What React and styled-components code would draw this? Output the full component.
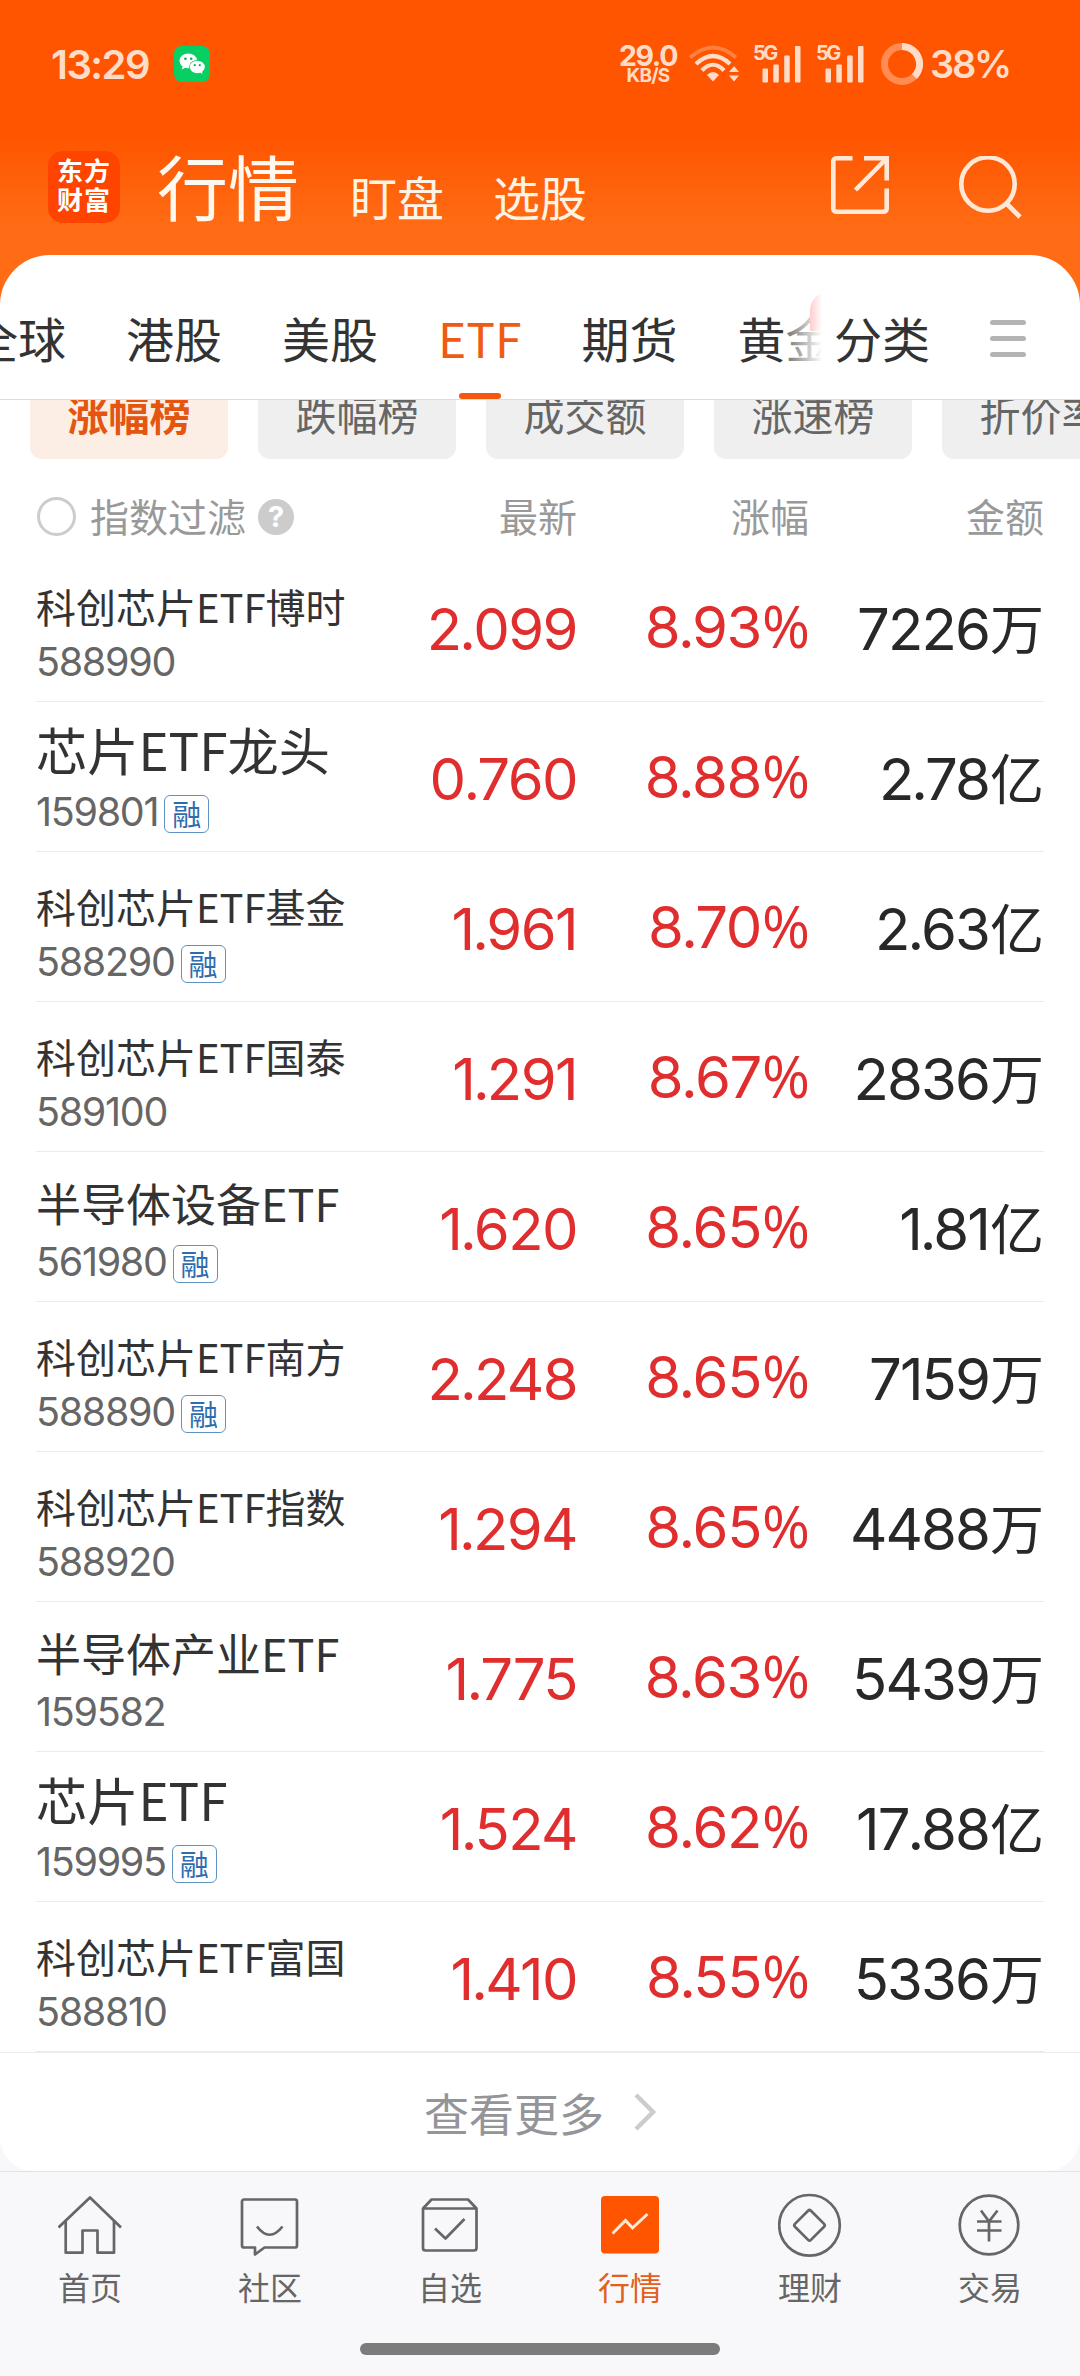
import React from 'react';
import styled, { createGlobalStyle, css } from 'styled-components';

const CJK = '"Noto Sans CJK SC", "Noto Sans", sans-serif';
const NUM = 'Inter, "Noto Sans CJK SC", sans-serif';

const GlobalStyle = createGlobalStyle`
  *, *::before, *::after { box-sizing: border-box; }
  body { margin: 0; background: #f8f8fa; font-family: ${CJK}; }
  svg { display: block; flex: none; }
`;

const Screen = styled.div`
  width: 1080px;
  height: 2376px;
  overflow: hidden;
  display: flex;
  flex-direction: column;
  background: #f8f8fa;
`;

const Hero = styled.header`
  height: 303px;
  flex: none;
  background: linear-gradient(#ff5500 0, #ff5500 136px, #ff6c15 228px, #ff6c15 100%);
`;

const StatusBar = styled.div`
  height: 128px;
  padding: 0 68px 0 51px;
  display: flex;
  align-items: center;
  color: #ffdcc8;
  font-family: ${NUM};
`;

const Clock = styled.span`
  font-size: 40px;
  font-weight: 600;
  letter-spacing: -1.5px;
  width: 123px;
`;

const StatusRight = styled.div`
  margin-left: auto;
  display: flex;
  align-items: center;
`;

const Speed = styled.div`
  width: 60px;
  margin-right: 10px;
  display: flex;
  flex-direction: column;
  align-items: center;
  font-weight: 700;
  white-space: nowrap;
`;

const SpeedValue = styled.span`
  font-size: 28.5px;
  line-height: 22px;
  letter-spacing: -1.4px;
`;

const SpeedUnit = styled.span`
  font-size: 19px;
  line-height: 17px;
  letter-spacing: -0.8px;
`;

const Signal = styled.div`
  position: relative;
  width: 48px;
  height: 38px;
  margin-left: ${(p) => p.$gap}px;
`;

const SignalTag = styled.span`
  position: absolute;
  left: 0;
  top: 0;
  font-size: 20px;
  line-height: 16px;
  font-weight: 700;
  letter-spacing: -2.6px;
`;

const BatteryArc = styled.svg`
  margin-left: 17px;
`;

const BatteryText = styled.span`
  width: 82px;
  margin-left: 7px;
  font-size: 38px;
  font-weight: 600;
  letter-spacing: -2.2px;
  white-space: nowrap;
`;

const TitleBar = styled.div`
  height: 118px;
  padding: 0 57px 0 48px;
  display: flex;
  align-items: center;
`;

const Logo = styled.div`
  width: 72px;
  height: 72px;
  border-radius: 15px;
  background: #ff4400;
  color: #fff;
  font-size: 26px;
  line-height: 29px;
  font-weight: 700;
  letter-spacing: 1px;
  padding: 4px 0 0 9px;
`;

const Title = styled.h1`
  margin: 0 0 7px 37px;
  font-size: 71px;
  line-height: 80px;
  font-weight: 400;
  color: #fff8ee;
`;

const SubTitle = styled.span`
  margin: 17px 0 0 ${(p) => p.$gap}px;
  font-size: 47px;
  line-height: 56px;
  color: #fff3e4;
`;

const TitleActions = styled.div`
  margin-left: auto;
  padding-top: 2px;
  display: flex;
  gap: 69px;
`;

const Panel = styled.main`
  margin-top: -48px;
  flex: none;
  border-radius: 50px 50px 34px 34px;
  background: #fff;
  overflow: hidden;
`;

const TabBar = styled.nav`
  height: 145px;
  padding-top: 26px;
  border-bottom: 1px solid #dcdcdc;
  display: flex;
`;

const TabScroller = styled.div`
  position: relative;
  width: 822px;
  flex: none;
  display: flex;
  gap: 60px;
  overflow: hidden;
`;

const Tab = styled.span`
  position: relative;
  flex: none;
  display: flex;
  align-items: center;
  height: 112px;
  font-size: 48px;
  color: ${(p) => (p.$active ? '#ef5b12' : '#333')};
  &:first-child { margin-left: -30px; }
`;

const TabMark = styled.i`
  position: absolute;
  left: calc(50% - 21px);
  bottom: -6px;
  width: 42px;
  height: 6px;
  border-radius: 3px;
  background: #f2580e;
`;

const TabBadge = styled.i`
  position: absolute;
  left: 810px;
  top: 10px;
  width: 40px;
  height: 40px;
  border-radius: 20px 0 0 0;
  background: #f22;
`;

const TabFade = styled.i`
  position: absolute;
  right: 0;
  top: 0;
  width: 37px;
  height: 110px;
  background: linear-gradient(to right, rgba(255, 255, 255, 0.3), #fff);
`;

const Category = styled.span`
  margin-left: 12px;
  height: 112px;
  display: flex;
  align-items: center;
  font-size: 48px;
  color: #333;
`;

const MenuIcon = styled.span`
  margin: 39px 0 0 60px;
  width: 36px;
  height: 37px;
  display: flex;
  flex-direction: column;
  justify-content: space-between;
  & > i { height: 5px; border-radius: 3px; background: #b4b4b4; }
`;

const ChipRow = styled.div`
  height: 59px;
  padding-left: 30px;
  display: flex;
  align-items: flex-end;
  gap: 30px;
  overflow: hidden;
`;

const Chip = styled.span`
  flex: none;
  width: 198px;
  height: 90px;
  padding-bottom: 3px;
  border-radius: 12px;
  display: flex;
  align-items: center;
  justify-content: center;
  font-size: 41px;
  background: ${(p) => (p.$active ? '#fdeee5' : '#efefef')};
  color: ${(p) => (p.$active ? '#e4560f' : '#666')};
  font-weight: ${(p) => (p.$active ? 700 : 400)};
`;

const grid = css`
  display: grid;
  grid-template-columns: 310px 231px 232px 235px;
  margin: 0 36px;
`;

const TableHead = styled.div`
  ${grid}
  height: 93px;
  padding-top: 19px;
  align-items: center;
  font-size: 39px;
  line-height: 56px;
  color: #999;
`;

const HeadCell = styled.span`
  text-align: right;
`;

const Filter = styled.span`
  display: flex;
  align-items: center;
`;

const Radio = styled.i`
  width: 39px;
  height: 39px;
  margin: 2px 14px 0 1px;
  border: 3px solid #ccc;
  border-radius: 50%;
`;

const Help = styled.i`
  width: 36px;
  height: 36px;
  margin: 3px 0 0 12px;
  border-radius: 50%;
  background: #ccc;
  color: #fff;
  font: 700 29px/36px Inter, sans-serif;
  text-align: center;
`;

const Row = styled.div`
  ${grid}
  grid-template-rows: 149px;
  height: 150px;
  border-bottom: 1px solid #ebebeb;
`;

const Name = styled.div`
  height: 82px;
  display: flex;
  align-items: flex-end;
  font-size: ${(p) => p.$size}px;
  line-height: 1.372;
  white-space: nowrap;
  color: #333;
`;

const CodeLine = styled.div`
  display: flex;
  align-items: center;
  height: 40px;
  margin-top: 8px;
`;

const Code = styled.span`
  font-family: ${NUM};
  font-size: 39.5px;
  letter-spacing: -1.3px;
  color: #666;
`;

const MarginTag = styled.span`
  width: 45px;
  height: 38px;
  margin: 4px 0 0 6px;
  border: 1.5px solid #5e93c4;
  border-radius: 6px;
  display: flex;
  align-items: center;
  justify-content: center;
  font-size: 29px;
  line-height: 32px;
  padding-bottom: 2px;
  color: #2f6cae;
`;

const Figure = styled.div`
  display: flex;
  align-items: center;
  justify-content: flex-end;
  padding-top: ${(p) => p.$drop}px;
  font-family: ${NUM};
  font-size: 58px;
  font-weight: 380;
  letter-spacing: ${(p) => p.$tracking}px;
  color: ${(p) => (p.$up ? '#e02d2d' : '#282828')};
`;

const FigureText = styled.span`
  white-space: nowrap;
  line-height: 70px;
`;

const Dot = styled.span`
  margin: 0 -1.2px;
`;

const PercentSign = styled.span`
  font-family: "Open Sans", sans-serif;
  font-weight: 400;
  line-height: 1;
  letter-spacing: 0;
  margin: 0 -1px 0 1px;
`;

const Unit = styled.span`
  font-family: ${CJK};
  font-weight: 400;
  font-size: 54px;
  line-height: 1;
  letter-spacing: 0;
  margin-left: 1px;
`;

const More = styled.div`
  height: 119px;
  border-top: 1px solid #ebebeb;
  display: flex;
  align-items: center;
  justify-content: center;
  gap: 30px;
  font-size: 45px;
  color: #949499;
`;

const BottomBar = styled.footer`
  flex: 1;
  border-top: 1px solid #e2e2e4;
  display: flex;
  flex-direction: column;
  align-items: center;
`;

const NavRow = styled.div`
  width: 1080px;
  height: 171px;
  padding-top: 21px;
  display: grid;
  grid-template-columns: repeat(6, 180px);
`;

const NavItem = styled.div`
  display: flex;
  flex-direction: column;
  align-items: center;
  font-size: 32px;
  line-height: 40px;
  gap: 9px;
  color: ${(p) => (p.$active ? '#e0601c' : '#666')};
`;

const HomeBar = styled.i`
  width: 360px;
  height: 12px;
  border-radius: 6px;
  background: #7c7c7c;
`;

function WeChatIcon() {
  return (
    <svg width="36" height="36" viewBox="0 0 36 36">
      <rect width="36" height="36" rx="8" fill="#08cf63" />
      <path d="M9 20l-1.4 3.6 4-2z" fill="#fff" />
      <ellipse cx="14.3" cy="14.8" rx="8.8" ry="7.4" fill="#fff" />
      <ellipse cx="23.3" cy="21" rx="8.2" ry="6.9" fill="#08cf63" />
      <ellipse cx="23.3" cy="21" rx="7.5" ry="6.2" fill="#fff" />
      <path d="M26 26l2.4 2.2-.4-3.6z" fill="#fff" />
      <g fill="#08b257">
        <circle cx="11.4" cy="12.8" r="1.3" />
        <circle cx="17.2" cy="12.8" r="1.3" />
        <circle cx="20.8" cy="19.2" r="1.1" />
        <circle cx="25.8" cy="19.2" r="1.1" />
      </g>
    </svg>
  );
}

function WifiIcon() {
  return (
    <svg width="51" height="38" viewBox="0 0 51 38" fill="none">
      <path d="M2 12.5Q25 -7.5 48 12.5" stroke="#ff8040" strokeWidth="4" />
      <path d="M8 19Q25 3 42 19" stroke="#ffdcc8" strokeWidth="4.2" />
      <path d="M14 25.5Q25 14 36 25.5" stroke="#ffdcc8" strokeWidth="4.2" />
      <path d="M19 30Q25 24 31 30L25 36.5z" fill="#ffdcc8" />
      <path d="M41 27l5-6 5 6zM41 30.5h10l-5 6z" fill="#ffdcc8" />
    </svg>
  );
}

function SignalBars({ gap }) {
  return (
    <Signal $gap={gap}>
      <SignalTag>5G</SignalTag>
      <svg width="48" height="38" viewBox="0 0 48 38" fill="#ffdcc8">
        <rect x="9.5" y="23.5" width="5.5" height="14" rx="1" />
        <rect x="20.3" y="19.5" width="5.5" height="18" rx="1" />
        <rect x="31.2" y="10.5" width="5.5" height="27" rx="1" />
        <rect x="42" y="1" width="5.5" height="36.5" rx="1" />
      </svg>
    </Signal>
  );
}

function BatteryRing() {
  return (
    <BatteryArc width="42" height="42" viewBox="0 0 42 42" fill="none">
      <circle cx="21" cy="21" r="17.5" stroke="#ff8c52" strokeWidth="7" />
      <path d="M21 3.5A17.5 17.5 0 0 1 33.4 33.4" stroke="#ffdcc8" strokeWidth="7" />
    </BatteryArc>
  );
}

function ShareIcon() {
  return (
    <svg width="58" height="58" viewBox="0 0 58 58" fill="none" stroke="#ffe9d6" strokeWidth="4.6">
      <path d="M21.5 2.3H5.3a3 3 0 0 0-3 3v47.4a3 3 0 0 0 3 3h47.4a3 3 0 0 0 3-3V32.5" />
      <path d="M33 2.3h22.7v22.2" />
      <path d="M55 3L24.5 34" />
    </svg>
  );
}

function SearchIcon() {
  return (
    <svg width="65" height="65" viewBox="0 0 65 65" fill="none" stroke="#ffe9d6" strokeWidth="4.6">
      <circle cx="30" cy="28" r="26.7" />
      <path d="M48.5 47.5L62 61" />
    </svg>
  );
}

function NavIcon({ kind }) {
  const common = { width: 64, height: 64, viewBox: '0 0 64 64', fill: 'none', stroke: '#666', strokeWidth: 2.7, strokeLinejoin: 'round' };
  switch (kind) {
    case 'home':
      return (
        <svg {...common}>
          <path d="M0.5 34.5L32 4.5 63 34.5" />
          <path d="M7.7 28V59.7H24.5V37.5H39.5V59.7H56V28" />
        </svg>
      );
    case 'community':
      return (
        <svg {...common}>
          <path d="M6 6.5H57a2 2 0 0 1 2 2V52.5a2 2 0 0 1-2 2H26.5L17 61.5V54.5H6a2 2 0 0 1-2-2V8.5a2 2 0 0 1 2-2z" />
          <path d="M19 33.5Q31.5 50 44.5 33.5" />
        </svg>
      );
    case 'favorites':
      return (
        <svg {...common}>
          <path d="M5 15.5L13.5 6.5H50L58.5 15.5V55a2.5 2.5 0 0 1-2.5 2.5H7.5A2.5 2.5 0 0 1 5 55zM5 15.5H58.5" />
          <path d="M17 35.5L27.5 45.5 46.5 26" />
        </svg>
      );
    case 'market':
      return (
        <svg {...common}>
          <rect x="3" y="3" width="58" height="57.5" rx="4" fill="#ff5500" stroke="none" />
          <path d="M14.5 40.5L27.5 27.5 34.5 35 49.5 21" stroke="#ffead8" strokeWidth="3" strokeLinejoin="miter" />
        </svg>
      );
    case 'wealth':
      return (
        <svg {...common}>
          <circle cx="31.5" cy="32.3" r="30.3" />
          <rect x="20.2" y="21" width="22.6" height="22.6" rx="2" transform="rotate(45 31.5 32.3)" />
        </svg>
      );
    default:
      return (
        <svg {...common}>
          <circle cx="31" cy="32" r="29.3" />
          <path d="M23 17.5L31 28.5 39.5 17.5M19 28.5H43.5M19 37.5H43.5M31 28.5V48.5" />
        </svg>
      );
  }
}

const tabs = ['全球', '港股', '美股', 'ETF', '期货', '黄金'];
const chips = ['涨幅榜', '跌幅榜', '成交额', '涨速榜', '折价率'];
const funds = [
  { name: '科创芯片ETF博时', size: 40, code: '588990', price: '2.099', change: '8.93', amount: '7226', unit: '万' },
  { name: '芯片ETF龙头', size: 51.2, code: '159801', tag: true, price: '0.760', change: '8.88', amount: '2.78', unit: '亿' },
  { name: '科创芯片ETF基金', size: 40, code: '588290', tag: true, price: '1.961', change: '8.70', amount: '2.63', unit: '亿' },
  { name: '科创芯片ETF国泰', size: 40, code: '589100', price: '1.291', change: '8.67', amount: '2836', unit: '万' },
  { name: '半导体设备ETF', size: 45, code: '561980', tag: true, price: '1.620', change: '8.65', amount: '1.81', unit: '亿' },
  { name: '科创芯片ETF南方', size: 40, code: '588890', tag: true, price: '2.248', change: '8.65', amount: '7159', unit: '万' },
  { name: '科创芯片ETF指数', size: 40, code: '588920', price: '1.294', change: '8.65', amount: '4488', unit: '万' },
  { name: '半导体产业ETF', size: 45, code: '159582', price: '1.775', change: '8.63', amount: '5439', unit: '万' },
  { name: '芯片ETF', size: 51.2, code: '159995', tag: true, price: '1.524', change: '8.62', amount: '17.88', unit: '亿' },
  { name: '科创芯片ETF富国', size: 40, code: '588810', price: '1.410', change: '8.55', amount: '5336', unit: '万' },
];
const nav = [
  ['home', '首页'],
  ['community', '社区'],
  ['favorites', '自选'],
  ['market', '行情'],
  ['wealth', '理财'],
  ['trade', '交易'],
];

function Digits({ value }) {
  const [whole, fraction] = value.split('.');
  return (
    <>
      {whole}
      {fraction && <Dot>.</Dot>}
      {fraction}
    </>
  );
}

function FundRow({ fund }) {
  return (
    <Row>
      <div>
        <Name $size={fund.size}>{fund.name}</Name>
        <CodeLine>
          <Code>{fund.code}</Code>
          {fund.tag && <MarginTag>融</MarginTag>}
        </CodeLine>
      </div>
      <Figure $up $drop={5} $tracking={-1.6}>
        <FigureText><Digits value={fund.price} /></FigureText>
      </Figure>
      <Figure $up $drop={0} $tracking={-1.4}>
        <FigureText>
          <Digits value={fund.change} />
          <PercentSign>%</PercentSign>
        </FigureText>
      </Figure>
      <Figure $drop={5} $tracking={-1.9}>
        <FigureText>
          <Digits value={fund.amount} />
          <Unit>{fund.unit}</Unit>
        </FigureText>
      </Figure>
    </Row>
  );
}

export default function App() {
  return (
    <Screen>
      <GlobalStyle />
      <Hero>
        <StatusBar>
          <Clock>13:29</Clock>
          <WeChatIcon />
          <StatusRight>
            <Speed>
              <SpeedValue>29.0</SpeedValue>
              <SpeedUnit>KB/S</SpeedUnit>
            </Speed>
            <WifiIcon />
            <SignalBars gap={14} />
            <SignalBars gap={15} />
            <BatteryRing />
            <BatteryText>38%</BatteryText>
          </StatusRight>
        </StatusBar>
        <TitleBar>
          <Logo>东方<br />财富</Logo>
          <Title>行情</Title>
          <SubTitle $gap={51}>盯盘</SubTitle>
          <SubTitle $gap={49}>选股</SubTitle>
          <TitleActions>
            <ShareIcon />
            <SearchIcon />
          </TitleActions>
        </TitleBar>
      </Hero>
      <Panel>
        <TabBar>
          <TabScroller>
            {tabs.map((t) => (
              <Tab key={t} $active={t === 'ETF'}>
                {t}
                {t === 'ETF' && <TabMark />}
              </Tab>
            ))}
            <TabBadge />
            <TabFade />
          </TabScroller>
          <Category>分类</Category>
          <MenuIcon><i /><i /><i /></MenuIcon>
        </TabBar>
        <ChipRow>
          {chips.map((c, i) => <Chip key={c} $active={i === 0}>{c}</Chip>)}
        </ChipRow>
        <TableHead>
          <Filter><Radio />指数过滤<Help>?</Help></Filter>
          <HeadCell>最新</HeadCell>
          <HeadCell>涨幅</HeadCell>
          <HeadCell>金额</HeadCell>
        </TableHead>
        {funds.map((f) => <FundRow key={f.code} fund={f} />)}
        <More>
          查看更多
          <svg width="22" height="38" viewBox="0 0 22 38" fill="none" stroke="#ccc" strokeWidth="4.5">
            <path d="M2 2L19 19 2 36" />
          </svg>
        </More>
      </Panel>
      <BottomBar>
        <NavRow>
          {nav.map(([kind, label]) => (
            <NavItem key={kind} $active={kind === 'market'}>
              <NavIcon kind={kind} />
              {label}
            </NavItem>
          ))}
        </NavRow>
        <HomeBar />
      </BottomBar>
    </Screen>
  );
}
